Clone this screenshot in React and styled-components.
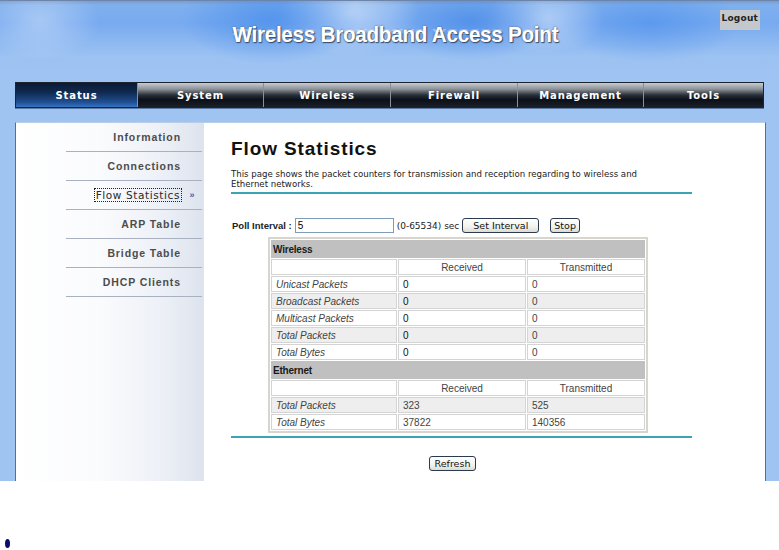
import React from "react";
import styled, { createGlobalStyle } from "styled-components";

const Global = createGlobalStyle`
  html, body {
    margin: 0;
    padding: 0;
    background: #fff;
  }
  body {
    font-family: "Liberation Sans", Arial, sans-serif;
  }
`;

const Frame = styled.div`
  width: 779px;
  height: 481px;
  display: flex;
  flex-direction: column;
  background:
    radial-gradient(ellipse 60px 40px at 40px 20px, rgba(255, 255, 255, 0.35), transparent),
    radial-gradient(ellipse 90px 45px at 270px 18px, rgba(70, 140, 235, 0.7), transparent),
    radial-gradient(ellipse 70px 45px at 350px 12px, rgba(255, 255, 255, 0.45), transparent),
    radial-gradient(ellipse 80px 40px at 470px 20px, rgba(60, 130, 230, 0.6), transparent),
    radial-gradient(ellipse 60px 35px at 545px 18px, rgba(255, 255, 255, 0.4), transparent),
    radial-gradient(ellipse 90px 40px at 650px 22px, rgba(70, 140, 235, 0.55), transparent),
    linear-gradient(to bottom, #7c9cca 0px, #7fb0ee 4px, #78aaf0 22px, #9cc2f2 55px, #a0c4f2 80px);
  border-top: 1px solid #6a84ac;
  box-sizing: border-box;
`;

const Header = styled.div`
  position: relative;
  height: 81px;
  display: flex;
  justify-content: center;
  align-items: flex-start;
`;

const SiteTitle = styled.h1`
  margin: 21px 0 0 12px;
  font-family: "Liberation Sans", Arial, sans-serif;
  font-weight: bold;
  font-size: 22px;
  letter-spacing: -0.3px;
  color: #fff;
  text-shadow: 1px 1px 1px #3a4a66, 0 0 2px #4a5a78;
  position: relative;
  transform: scaleX(0.94);

  &::after {
    content: attr(data-text);
    position: absolute;
    left: 0;
    top: 16px;
    transform: scaleY(-0.45);
    transform-origin: top;
    color: rgba(255, 255, 255, 0.35);
    text-shadow: none;
  }
`;

const Logout = styled.a`
  position: absolute;
  right: 19px;
  top: 9px;
  padding: 3px 2px 7px;
  background: #c4c8cc;
  color: #222;
  font-family: "DejaVu Sans", sans-serif;
  font-weight: bold;
  font-size: 9px;
  letter-spacing: 0.2px;
  text-decoration: none;
`;

const Nav = styled.nav`
  margin: 0 15px 0 15px;
  height: 24px;
  display: flex;
  border: 1px solid #1c2430;
  box-shadow: 0 1px 0 #5b7aa6;
`;

const Tab = styled.div`
  box-sizing: border-box;
  flex: 0 0 ${(p) => p.$w}px;
  display: flex;
  align-items: center;
  justify-content: center;
  color: #fff;
  font-family: "DejaVu Sans", Verdana, sans-serif;
  font-weight: bold;
  font-size: 10px;
  letter-spacing: 0.9px;
  border-left: ${(p) => (p.$first ? "none" : "1px solid #8a9098")};
  background: ${(p) =>
    p.$active
      ? "linear-gradient(to bottom, #0b1a33 0%, #112a52 40%, #1f4f92 80%, #3574c4 100%)"
      : "linear-gradient(to bottom, #c9ccd0 0%, #8e949a 25%, #2a3038 50%, #0c1018 70%, #1a2028 100%)"};
`;

const Panel = styled.div`
  margin: 14px 13px 0 15px;
  flex: 1;
  display: flex;
  background: #fff;
  border-left: 1px solid #4d6fa3;
  border-right: 1px solid #4d6fa3;
  border-top: 1px solid #b8cde8;
`;

const Sidebar = styled.ul`
  list-style: none;
  margin: 0;
  padding: 0;
  width: 188px;
  background: linear-gradient(to right, #ffffff 0%, #fafbfd 45%, #eef1f7 75%, #dde3ee 100%);
`;

const MenuItem = styled.li`
  height: 28px;
  margin-left: 50px;
  margin-right: 2px;
  border-bottom: 1px solid #a9b1c0;
  display: flex;
  align-items: center;
  justify-content: flex-end;
  padding-right: ${(p) => (p.$active ? "0" : "21px")};
  font-family: "Liberation Sans", Arial, sans-serif;
  font-weight: bold;
  font-size: 10.5px;
  letter-spacing: 0.9px;
  color: #4c4c4c;
`;

const ActiveLabel = styled.span`
  font-family: "DejaVu Sans", Verdana, sans-serif;
  color: #2a2a2a;
  font-weight: normal;
  font-size: 10.5px;
  letter-spacing: 0.6px;
  outline: 1px dotted #222;
  padding: 0 1px;
`;

const Arrow = styled.span`
  width: 21px;
  text-align: center;
  font-size: 9px;
  color: #3b64b0;
  letter-spacing: -1px;
`;

const Content = styled.main`
  flex: 1;
  padding: 15px 0 0 27px;
  display: flex;
  flex-direction: column;
`;

const PageTitle = styled.h2`
  margin: 0;
  font-family: "Liberation Sans", Arial, sans-serif;
  font-size: 19px;
  font-weight: bold;
  letter-spacing: 0.9px;
  color: #111;
`;

const Desc = styled.p`
  margin: 9px 0 0;
  width: 441px;
  padding: 0 20px 3px 0;
  border-bottom: 2px solid #3aa3b4;
  font-family: "DejaVu Sans", Tahoma, sans-serif;
  font-size: 8.6px;
  line-height: 10px;
  color: #222;
`;

const PollRow = styled.div`
  margin-top: 24px;
  display: flex;
  align-items: center;
  gap: 3px;
  font-family: "DejaVu Sans", Tahoma, sans-serif;
  font-size: 9px;
  color: #222;
`;

const PollLabel = styled.b`
  margin-left: 1px;
  font-family: "Liberation Sans", Arial, sans-serif;
  font-size: 9.5px;
  letter-spacing: 0;
`;

const Input = styled.input`
  width: 93px;
  height: 11px;
  padding: 1px 2px;
  border: 1px solid #7f9db9;
  font-size: 10px;
  font-family: "Liberation Sans", Arial, sans-serif;
  outline: none;
`;

const Button = styled.button`
  height: 15px;
  padding: 0 ${(p) => p.$pad || 4}px;
  margin-left: ${(p) => p.$ml || 0}px;
  border: 1px solid #2b3a4e;
  border-radius: 3px;
  background: linear-gradient(to bottom, #ffffff 0%, #f2f2ee 60%, #dcdcd4 100%);
  font-family: "DejaVu Sans", Tahoma, sans-serif;
  font-size: 9.5px;
  color: #111;
  line-height: 11px;
`;

const Table = styled.table`
  margin: 4px 0 0 37px;
  width: 380px;
  border: 2px solid #d8d6cc;
  border-spacing: 1px;
  font-family: "Liberation Sans", Arial, sans-serif;
  font-size: 10px;
  color: #333;
`;

const SectionCell = styled.td`
  height: 18px;
  padding: 0 2px;
  background: #c0c0c0;
  font-weight: bold;
  font-size: 10px;
  color: #1a1a1a;
  letter-spacing: -0.2px;
`;

const Cell = styled.td`
  height: 14px;
  padding: 0 4px;
  border: 1px solid #d4d4d4;
  background: ${(p) => (p.$shade ? "#eeeeee" : "#ffffff")};
  text-align: ${(p) => (p.$center ? "center" : "left")};
  font-style: ${(p) => (p.$italic ? "italic" : "normal")};
  color: ${(p) => (p.$dark ? "#111" : "#444")};
  width: ${(p) => (p.$w ? p.$w + "px" : "auto")};
`;

const Footer = styled.div`
  width: 443px;
  margin-top: 3px;
  border-top: 2px solid #3aa3b4;
  display: flex;
  justify-content: center;
  padding: 18px 18px 0 0;
`;

const Below = styled.div`
  height: 69px;
  display: flex;
  align-items: flex-end;
  padding: 0 0 2px 5px;
  box-sizing: border-box;
`;

const Bullet = styled.span`
  width: 5px;
  height: 9px;
  border-radius: 50%;
  background: #0a0a6a;
`;

const tabs = [
  ["Status", 121],
  ["System", 126],
  ["Wireless", 127],
  ["Firewall", 127],
  ["Management", 126],
  ["Tools", 120],
];

const menu = [
  "Information",
  "Connections",
  "Flow Statistics",
  "ARP Table",
  "Bridge Table",
  "DHCP Clients",
];

const wireless = [
  ["Unicast Packets", "0", "0"],
  ["Broadcast Packets", "0", "0"],
  ["Multicast Packets", "0", "0"],
  ["Total Packets", "0", "0"],
  ["Total Bytes", "0", "0"],
];

const ethernet = [
  ["Total Packets", "323", "525"],
  ["Total Bytes", "37822", "140356"],
];

function Section({ title, rows, startShade }) {
  return (
    <>
      <tr>
        <SectionCell colSpan={3}>{title}</SectionCell>
      </tr>
      <tr>
        <Cell $w={116}>&nbsp;</Cell>
        <Cell $center $w={118}>
          Received
        </Cell>
        <Cell $center>Transmitted</Cell>
      </tr>
      {rows.map(([label, rx, tx], i) => {
        const shade = (i + startShade) % 2 === 1;
        return (
          <tr key={label}>
            <Cell $shade={shade} $italic>
              {label}
            </Cell>
            <Cell $shade={shade} $dark={title === "Wireless"}>
              {rx}
            </Cell>
            <Cell $shade={shade}>{tx}</Cell>
          </tr>
        );
      })}
    </>
  );
}

export default function App() {
  return (
    <>
      <Global />
      <Frame>
        <Header>
          <SiteTitle data-text="Wireless Broadband Access Point">
            Wireless Broadband Access Point
          </SiteTitle>
          <Logout href="#">Logout</Logout>
        </Header>
        <Nav>
          {tabs.map(([name, w], i) => (
            <Tab key={name} $w={w} $first={i === 0} $active={i === 0}>
              {name}
            </Tab>
          ))}
        </Nav>
        <Panel>
          <Sidebar>
            {menu.map((m) =>
              m === "Flow Statistics" ? (
                <MenuItem key={m} $active>
                  <ActiveLabel>{m}</ActiveLabel>
                  <Arrow>»</Arrow>
                </MenuItem>
              ) : (
                <MenuItem key={m}>{m}</MenuItem>
              )
            )}
          </Sidebar>
          <Content>
            <PageTitle>Flow Statistics</PageTitle>
            <Desc>
              This page shows the packet counters for transmission and reception
              regarding to wireless and Ethernet networks.
            </Desc>
            <PollRow>
              <PollLabel>Poll Interval :</PollLabel>
              <Input defaultValue="5" />
              <span>(0-65534) sec</span>
              <Button $pad={10}>Set Interval</Button>
              <Button $ml={8} $pad={3}>
                Stop
              </Button>
            </PollRow>
            <Table>
              <tbody>
                <Section title="Wireless" rows={wireless} startShade={0} />
                <Section title="Ethernet" rows={ethernet} startShade={1} />
              </tbody>
            </Table>
            <Footer>
              <Button $pad={5}>Refresh</Button>
            </Footer>
          </Content>
        </Panel>
      </Frame>
      <Below>
        <Bullet />
      </Below>
    </>
  );
}
